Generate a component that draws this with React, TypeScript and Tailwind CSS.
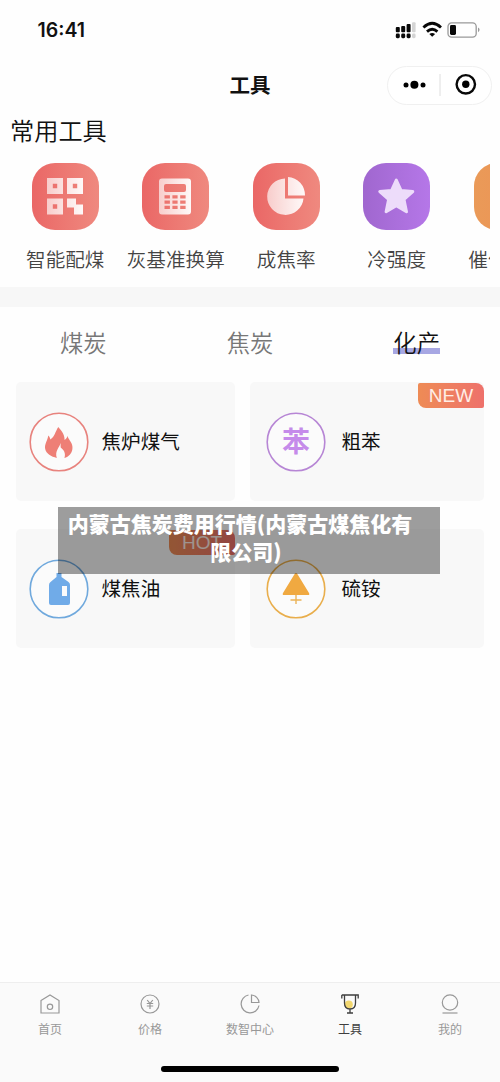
import type { ReactNode } from "react";

function Tool({ name, children, className, label = "" }: { name: string; children: ReactNode; className: string; label?: string }) {
  return (
    <div className="flex w-[110.5px] shrink-0 flex-col items-center">
      <div className={`h-[67px] w-[67px] overflow-hidden rounded-[23px] bg-linear-to-r ${className}`}>
        <svg width="67" height="67" viewBox="0 0 67 67">
          <defs>
            <linearGradient id="pale" x1="0" x2="1">
              <stop offset="0" stopColor="#fff" stopOpacity=".65" />
              <stop offset="1" stopColor="#fff" stopOpacity=".95" />
            </linearGradient>
          </defs>
          {children}
        </svg>
      </div>
      <span className={`mt-[15px] whitespace-nowrap text-[19.6px] leading-[28px] font-[350] text-[#444] ${label}`}>{name}</span>
    </div>
  );
}

function Card({ name, ring, badge, wide, children }: { name: string; ring: string; badge?: string; wide?: boolean; children: ReactNode }) {
  return (
    <div className={`relative flex h-[119px] items-center rounded-[5px] bg-[#f8f8f8] pt-px ${wide ? "w-[234px] pl-[15.5px]" : "w-[219px] pl-[12.5px]"}`}>
      <svg width="60" height="60" viewBox="0 0 60 60" className={ring}>
        <circle cx="30" cy="30" r="28.8" fill="#fbfbfb" stroke="currentColor" strokeWidth="1.6" />
        {children}
      </svg>
      <span className={`pb-[3px] text-[19.6px] leading-7 text-[#111] ${wide ? "ml-4" : "ml-[13px]"}`}>{name}</span>
      {badge && (
        <span className="absolute top-px right-0 h-[25px] w-[66px] rounded-[2px] rounded-tr-[8px] rounded-bl-[8px] bg-linear-to-r from-[#ee8b55] to-[#ee716b] text-center font-['Liberation_Sans',sans-serif] text-[19px] leading-[26px] text-[#ffede5]">
          {badge}
        </span>
      )}
    </div>
  );
}

function NavItem({ name, active, children }: { name: string; active?: boolean; children: ReactNode }) {
  return (
    <div className={`flex flex-1 flex-col items-center ${active ? "text-[#3e3e3e]" : "text-[#989898]"}`}>
      <svg width="24" height="24" viewBox="0 0 24 24" fill="none" stroke="currentColor" strokeWidth="1.2">{children}</svg>
      <span className="mt-[4px] text-[12px] leading-[18px]">{name}</span>
    </div>
  );
}

export default function App() {
  return (
    <div className="relative flex h-[1082px] w-[500px] flex-col overflow-hidden bg-[#fefefe] font-['Noto_Sans_CJK_SC',sans-serif] text-[#111]">
      <header className="flex h-[60px] items-center justify-between pr-[17px] pl-[37.5px]">
        <span className="pt-[2px] font-['Inter',sans-serif] text-[19.5px] font-semibold">16:41</span>
        <svg width="88" height="20" viewBox="0 0 88 20">
          <g fill="#080808">
            <rect x="0.8" y="7" width="4" height="5.3" rx="1" /><rect x="6.2" y="6" width="4" height="6.3" rx="1" /><rect x="11.6" y="4" width="4" height="8.3" rx="1" />
            <rect x="0.8" y="13.6" width="4" height="4.6" rx="1.4" /><rect x="6.2" y="13.6" width="4" height="4.6" rx="1.4" /><rect x="11.6" y="13.6" width="4" height="4.6" rx="1.4" />
            <rect x="55" y="5" width="6" height="10" rx="1.4" />
          </g>
          <g fill="#d4d4d4"><rect x="17" y="2.3" width="3.6" height="10" rx="1" /><rect x="17" y="13.6" width="3.6" height="4.6" rx="1.4" /></g>
          <g fill="none" stroke="#080808" strokeWidth="2.8">
            <path d="M28.4 7.4Q37.2 -.8 46 7.4" /><path d="M32 11.6Q37.2 6.8 42.4 11.6" />
          </g>
          <path d="M34.3 14Q37.2 11.8 40.1 14L37.2 16.7Z" fill="#080808" />
          <rect x="53" y="2.9" width="28.2" height="14.2" rx="3.6" fill="none" stroke="#999" strokeWidth="1.3" />
          <path d="M83 7.6q3.2 2.2 0 4.6z" fill="#999" />
        </svg>
      </header>
      <div className="flex h-[50px] items-center justify-between pr-[8.5px] pl-[229.5px]">
        <h1 className="pb-[2px] text-[20.5px] leading-7 font-bold">工具</h1>
        <div className="flex h-[39px] w-[105px] items-center rounded-full border border-[#f0f0f0] bg-white">
          <svg width="103" height="37" viewBox="0 0 103 37">
            <circle cx="18" cy="18" r="2.5" /><circle cx="26.4" cy="17.7" r="4" /><circle cx="35" cy="18" r="2.5" />
            <path d="M52 7v22" stroke="#dedede" />
            <circle cx="77.8" cy="17.3" r="9.2" fill="none" stroke="#080808" strokeWidth="2.4" /><circle cx="77.8" cy="17.3" r="3.7" />
          </svg>
        </div>
      </div>
      <h2 className="h-[53px] pl-[10px] text-[24.2px] leading-[39px] font-[350]">常用工具</h2>
      <div className="mr-[10px] flex h-[124px] overflow-hidden pl-[10px]">
        <Tool name="智能配煤" className="from-[#ea6766] to-[#ef897f]">
          <path fill="url(#pale)" fillRule="evenodd" d="M15 15h16v16H15zM20.8 20.8v4.4h4.4v-4.4zM35 15h16v16H35zM40.8 20.8v4.4h4.4v-4.4zM15 35.5h16v16H15zM20.8 41.3v4.4h4.4v-4.4zM35 35.5h9v6h7v10h-9v-7h-7z" />
        </Tool>
        <Tool name="灰基准换算" className="from-[#ea6766] to-[#ef897f]">
          <path fill="url(#pale)" fillRule="evenodd" d="M20 15.5h26a3 3 0 0 1 3 3v30a3 3 0 0 1-3 3H20a3 3 0 0 1-3-3v-30a3 3 0 0 1 3-3ZM24 21a2 2 0 0 0-2 2v4a2 2 0 0 0 2 2h18a2 2 0 0 0 2-2v-4a2 2 0 0 0-2-2ZM22.5 32.2v3.2h5.4v-3.2zM30.4 32.2v3.2h5.2v-3.2zM38.2 32.2v3.2h5.4v-3.2zM22.5 37.5v3.2h5.4v-3.2zM30.4 37.5v3.2h5.2v-3.2zM38.2 37.5v3.2h5.4v-3.2zM22.5 42.8v3.2h5.4v-3.2zM30.4 42.8v3.2h5.2v-3.2zM38.2 42.8v3.2h5.4v-3.2z" />
        </Tool>
        <Tool name="成焦率" className="from-[#ea6766] to-[#ef897f]">
          <path fill="url(#pale)" d="M32 15.5v20h18.5A18.2 18.2 0 1 1 32 15.5ZM35 14A18 18 0 0 1 52 32.5H35Z" />
        </Tool>
        <Tool name="冷强度" className="from-[#a067cf] to-[#b577e8]">
          <path d="M33.3 17l4.7 10.4 11.8 1.2-8.8 7.9 2.5 12.2-10.2-6-10.2 6 2.5-12.2-8.8-7.9 11.8-1.2z" fill="#eddcfa" stroke="#eddcfa" strokeWidth="3" strokeLinejoin="round" />
        </Tool>
        <Tool name="催化" label="pr-[39px]" className="from-[#ea9a58] to-[#ee9155]"><g /></Tool>
      </div>
      <div className="h-[20px] bg-[#f7f7f7]" />
      <div className="grid h-[75px] grid-cols-3 pt-4 text-center text-[23.3px] leading-[38px] font-[350] text-[#777]">
        <span>煤炭</span>
        <span>焦炭</span>
        <span className="text-[#111]"><span className="bg-linear-to-t from-[#a7a7e3] from-[6px] to-transparent to-[6px] bg-[position:0_-5px] bg-no-repeat">化产</span></span>
      </div>
      <main className="grid h-[600px] grid-cols-[219px_234px] grid-rows-[119px_119px] content-start gap-x-[15px] gap-y-7 pl-4">
        <Card name="焦炉煤气" ring="text-[#e8837e]">
          <path fill="#ee7f76" d="M29.3 15c1 1.5 6.5 6 6.3 13 1.8-1 2.7-2.6 2.8-4.2 1 4.1 6 7.4 5 13.2-.7 4.7-3.5 7.7-8 9 1.7-5-.7-8.2-3.7-10.6-.2-2 .1-3.4-.2-4.5-.8 4.5-6 7.7-3.7 15.1-5.5-1.2-10.6-4.1-11.6-8.9-1-4.8 2.4-8.4 3.1-13.5 1 1.1 1.8 2.4 2 4C26 24.5 26 20 29.3 15Z" />
        </Card>
        <Card name="粗苯" ring="text-[#b786d5]" badge="NEW" wide>
          <text x="30" y="40" textAnchor="middle" fontSize="28" fontWeight="bold" fill="#c58bea">苯</text>
        </Card>
        <Card name="煤焦油" ring="text-[#70a9dd]" badge="HOT">
          <path fill="#70abe8" fillRule="evenodd" d="M27.5 14h5v4l7 5q1.5 1 1.5 3v18q0 2-2 2H22q-2 0-2-2V26q0-2 1.5-3l6-5ZM33 27v10h5V27Z" />
        </Card>
        <Card name="硫铵" ring="text-[#e9ae4c]" wide>
          <path fill="#f0a941" d="M30 14q1 0 2 2l11 18q1 2-1 2H18q-2 0-1-2l11-18q1-2 2-2" /><path d="M30 36v9M24.5 41h11" stroke="#ebb459" strokeWidth="1.4" />
        </Card>
      </main>
      <div className="absolute top-[507px] left-[58px] h-[67px] w-[382px] bg-black/38 pt-[2px] text-center text-[21px] leading-[28px] font-black text-white">
        <p className="pr-[18px] whitespace-nowrap">内蒙古焦炭费用行情(内蒙古煤焦化有</p>
        <p className="pr-[6px]">限公司)</p>
      </div>
      <nav className="flex h-[100px] border-t border-[#eee] bg-[#fafafa] pt-[9px]">
        <NavItem name="首页"><path d="M3 8.5 12 3l9 5.5V21H3z" /><circle cx="12" cy="14.8" r="2.7" /></NavItem>
        <NavItem name="价格"><circle cx="12" cy="12" r="9" /><path d="m9.2 8 2.8 3.5L14.8 8M8.8 11.5h6.4M8.8 14h6.4M12 11.5V17" /></NavItem>
        <NavItem name="数智中心"><path d="M10.5 3A9 9 0 1 0 21 13.5M13.5 3v7.5H21A8 8 0 0 0 13.5 3Z" /></NavItem>
        <NavItem name="工具" active><circle cx="10.8" cy="12.5" r="4" fill="#f2d76f" stroke="none" /><path d="M6.5 3h11v8q0 6-5.5 6t-5.5-6zM3.8 3v3.5M3.8 3h16.4v3.5M12 17v4M9 21h6" strokeWidth="1.3" /></NavItem>
        <NavItem name="我的"><circle cx="12" cy="10.5" r="7.7" /><path d="M4.5 21h15" /></NavItem>
      </nav>
      <div className="absolute bottom-[10px] left-[161px] h-[6px] w-[178px] rounded-full bg-black" />
    </div>
  );
}
